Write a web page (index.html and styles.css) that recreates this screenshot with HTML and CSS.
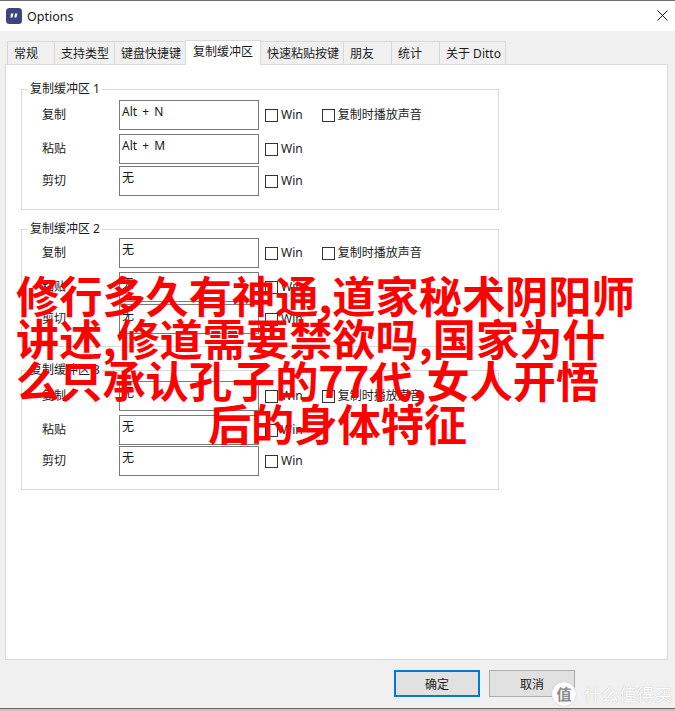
FILE: index.html
```html
<!DOCTYPE html>
<html lang="zh-CN">
<head>
    <meta charset="UTF-8">
    <title>Options</title>
    <link rel="stylesheet" href="styles.css">
</head>
<body>
    <div class="window">
        <div class="titlebar">
            <svg class="app-icon" width="16" height="16" viewBox="0 0 16 16">
                <rect width="16" height="16" rx="3.5" fill="#3b4681"/>
                <path d="M5 5.500h2.400L6.400 9.500H4.400zM9 5.500h2.400l-1 4H8.400z" fill="#fff"/>
            </svg>
            <span class="title">Options</span>
            <svg class="close" width="11" height="11" viewBox="0 0 11 11">
                <path d="M0.500 0.500l10 10M10.500 0.500l-10 10" stroke="#111" stroke-width="1" fill="none"/>
            </svg>
        </div>

        <div class="content">
            <div class="tabs">
                <div class="tab">常规</div>
                <div class="tab">支持类型</div>
                <div class="tab">键盘快捷键</div>
                <div class="tab active">复制缓冲区</div>
                <div class="tab">快速粘贴按键</div>
                <div class="tab">朋友</div>
                <div class="tab">统计</div>
                <div class="tab">关于 Ditto</div>
            </div>

            <div class="panel">
                <fieldset class="group group-1">
                    <legend>复制缓冲区 1</legend>
                    <div class="row">
                        <span class="label">复制</span>
                        <div class="hotkey">Alt + N</div>
                        <span class="check"></span><span class="check-text">Win</span>
                        <span class="check sound"></span><span class="check-text">复制时播放声音</span>
                    </div>
                    <div class="row">
                        <span class="label">粘贴</span>
                        <div class="hotkey">Alt + M</div>
                        <span class="check"></span><span class="check-text">Win</span>
                    </div>
                    <div class="row">
                        <span class="label">剪切</span>
                        <div class="hotkey">无</div>
                        <span class="check"></span><span class="check-text">Win</span>
                    </div>
                </fieldset>

                <fieldset class="group group-2">
                    <legend>复制缓冲区 2</legend>
                    <div class="row">
                        <span class="label">复制</span>
                        <div class="hotkey">无</div>
                        <span class="check"></span><span class="check-text">Win</span>
                        <span class="check sound"></span><span class="check-text">复制时播放声音</span>
                    </div>
                    <div class="row">
                        <span class="label">粘贴</span>
                        <div class="hotkey">无</div>
                        <span class="check"></span><span class="check-text">Win</span>
                    </div>
                    <div class="row">
                        <span class="label">剪切</span>
                        <div class="hotkey">无</div>
                        <span class="check"></span><span class="check-text">Win</span>
                    </div>
                </fieldset>

                <fieldset class="group group-3">
                    <legend>复制缓冲区 3</legend>
                    <div class="row">
                        <span class="label">复制</span>
                        <div class="hotkey">无</div>
                        <span class="check"></span><span class="check-text">Win</span>
                        <span class="check sound"></span><span class="check-text">复制时播放声音</span>
                    </div>
                    <div class="row">
                        <span class="label">粘贴</span>
                        <div class="hotkey">无</div>
                        <span class="check"></span><span class="check-text">Win</span>
                    </div>
                    <div class="row">
                        <span class="label">剪切</span>
                        <div class="hotkey">无</div>
                        <span class="check"></span><span class="check-text">Win</span>
                    </div>
                </fieldset>
            </div>

            <div class="buttons">
                <button class="btn primary">确定</button>
                <button class="btn">取消</button>
            </div>
        </div>
    </div>

    <!-- red caption stamped over the screenshot -->
    <div class="caption">
        <div>修行多久有神通,道家秘术阴阳师</div>
        <div>讲述,修道需要禁欲吗,国家为什</div>
        <div>么只承认孔子的77代,女人开悟</div>
        <div class="caption-last">后的身体特征</div>
    </div>

    <div class="watermark">
        <span class="watermark-badge">值</span>
        <span class="watermark-text">什么值得买</span>
    </div>
</body>
</html>
```

FILE: styles.css
```css
* {
    margin: 0;
    padding: 0;
    box-sizing: border-box;
}

body {
    width: 675px;
    height: 711px;
    overflow: hidden;
    position: relative;
    background: #c4c4c4;
    font-family: "Noto Sans", "Noto Sans CJK SC", sans-serif;
    font-size: 12px;
    color: #1a1a1a;
}

.window {
    height: 709px;
    display: flex;
    flex-direction: column;
    border-top: 1px solid #707070;
    border-bottom: 1px solid #6b6b6b;
    background: #f0f0f0;
}

.titlebar {
    height: 30px;
    flex-shrink: 0;
    display: flex;
    align-items: center;
    padding-left: 6px;
    padding-right: 7px;
    background: white;
}

.app-icon {
    margin-right: 5px;
}

.title {
    font-size: 12.500px;
    flex: 1;
}

/* tabs */
.content {
    flex: 1;
    display: flex;
    flex-direction: column;
    padding: 0 7px 0 5px;
}

.tabs {
    height: 33px;
    flex-shrink: 0;
    display: grid;
    grid-template-columns: 47px 60px 71px 75px 83px 48px 48px 66px;
    align-items: end;
    padding-left: 2px;
    position: relative;
    z-index: 1;
}

.tab {
    width: calc(100% + 1px);
    height: 23px;
    padding-left: 6px;
    line-height: 23px;
    white-space: nowrap;
    background: #f0f0f0;
    border: 1px solid #d9d9d9;
    border-bottom: none;
}

.tab.active {
    height: 25px;
    margin-bottom: -1px;
    padding-left: 7px;
    background: white;
    position: relative;
    z-index: 1;
    line-height: 22px;
}

.panel {
    height: 596px;
    flex-shrink: 0;
    padding: 16px 0 0 15px;
    background: white;
    border: 1px solid #d9d9d9;
}

/* option groups */
.group {
    width: 478px;
    height: 129px;
    padding: 3px 0 0 20px;
    border: 1px solid #d9d9d9;
}

.group legend {
    margin-left: -14px;
    padding: 0 2px;
    line-height: 16px;
}

.group-2 {
    height: 126px;
    margin-top: 11px;
    padding-top: 1px;
}

.group-3 {
    height: 128px;
    margin-top: 15px;
    padding-top: 3px;
}

.row {
    display: flex;
    align-items: center;
    height: 30px;
    margin-bottom: 4px;
}

.row:last-child {
    margin-top: -2px;
}

.group-3 .row:last-child {
    margin-top: -3px;
}

.label {
    width: 77px;
    margin-top: -2px;
}

.hotkey {
    width: 140px;
    height: 30px;
    margin-right: 6px;
    padding: 2px 0 0 2px;
    line-height: 18px;
    word-spacing: 2px;
    border: 1px solid #7a7a7a;
    background: white;
}

.check {
    width: 13px;
    height: 13px;
    margin-right: 3px;
    border: 1px solid #333;
    background: white;
}

.check-text {
    margin-top: -2px;
}

.check.sound {
    margin-left: 19px;
}

/* bottom buttons */
.buttons {
    display: flex;
    justify-content: flex-end;
    gap: 9px;
    padding-top: 10px;
    padding-right: 93px;
}

.btn {
    width: 86px;
    height: 27px;
    font: inherit;
    color: #1a1a1a;
    background: #e1e1e1;
    border: 1px solid #adadad;
}

.btn.primary {
    border: 2px solid #0078d7;
}

/* overlays */
.close {
    flex-shrink: 0;
    margin-top: -1px;
}

.caption {
    position: absolute;
    left: 16px;
    right: 16px;
    top: 273px;
    font-family: "Noto Sans CJK SC", sans-serif;
    font-size: 43.200px;
    font-weight: 700;
    line-height: 42.700px;
    color: #ff0000;
    white-space: nowrap;
}

.caption-last {
    text-align: center;
}

.watermark {
    position: absolute;
    left: 552px;
    top: 682px;
    display: flex;
    align-items: center;
    gap: 8px;
    color: white;
}

.watermark-badge {
    width: 24px;
    height: 24px;
    border-radius: 50%;
    background: white;
    color: #8a8a8a;
    font-size: 15px;
    font-weight: 700;
    line-height: 24px;
    text-align: center;
    box-shadow: 0 0 1px #999;
}

.watermark-text {
    font-size: 17.600px;
    line-height: 24px;
    text-shadow: 0 0 1px #aaa;
}
```
